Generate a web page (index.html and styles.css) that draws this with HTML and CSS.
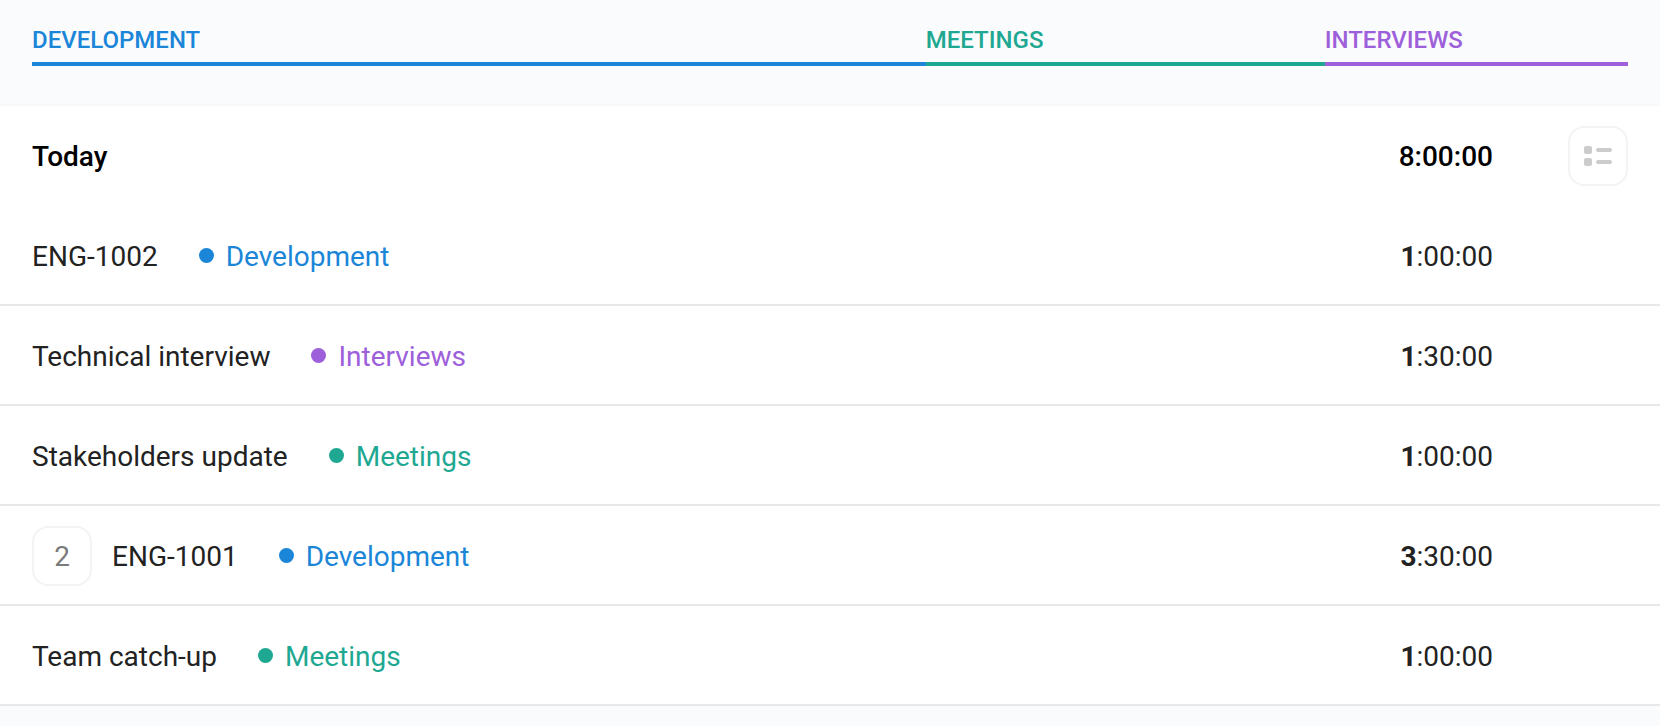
FILE: index.html
```
<!DOCTYPE html>
<html lang="en">
<head>
<meta charset="utf-8">
<meta name="viewport" content="width=device-width, initial-scale=1">
<title>Time entries</title>
<link rel="stylesheet" href="styles.css">
</head>
<body>
<header class="summary">
  <div class="segment development" style="width: 56%">Development</div>
  <div class="segment meetings" style="width: 25%">Meetings</div>
  <div class="segment interviews" style="width: 19%">Interviews</div>
</header>
<main class="day">
  <div class="row day-header">
    <h1 class="day-title">Today</h1>
    <span class="time">8:00:00</span>
    <div class="actions">
      <button class="box-button" type="button" aria-label="Group entries">
        <svg class="list-icon" width="28" height="20" viewBox="0 0 28 20" aria-hidden="true">
          <rect x="0" y="0" width="8" height="8" rx="2"/>
          <rect x="12" y="2" width="16" height="4" rx="2"/>
          <rect x="0" y="12" width="8" height="8" rx="2"/>
          <rect x="12" y="14" width="16" height="4" rx="2"/>
        </svg>
      </button>
    </div>
  </div>
  <ul class="entries">
    <li class="row entry">
      <span class="name">ENG-1002</span>
      <span class="project development">Development</span>
      <span class="time"><b>1</b>:00:00</span>
      <div class="actions"></div>
    </li>
    <li class="row entry">
      <span class="name">Technical interview</span>
      <span class="project interviews">Interviews</span>
      <span class="time"><b>1</b>:30:00</span>
      <div class="actions"></div>
    </li>
    <li class="row entry">
      <span class="name">Stakeholders update</span>
      <span class="project meetings">Meetings</span>
      <span class="time"><b>1</b>:00:00</span>
      <div class="actions"></div>
    </li>
    <li class="row entry">
      <button class="box-button count" type="button">2</button>
      <span class="name">ENG-1001</span>
      <span class="project development">Development</span>
      <span class="time"><b>3</b>:30:00</span>
      <div class="actions"></div>
    </li>
    <li class="row entry">
      <span class="name">Team catch-up</span>
      <span class="project meetings">Meetings</span>
      <span class="time"><b>1</b>:00:00</span>
      <div class="actions"></div>
    </li>
  </ul>
</main>
</body>
</html>
```

FILE: styles.css
```
* {
  box-sizing: border-box;
}

body {
  margin: 0;
  background: #fafbfd;
  color: #222;
  font-family: Roboto, sans-serif;
  font-size: 28px;
  line-height: 33px;
}

.development { color: #1b86d8; }
.meetings { color: #1ea892; }
.interviews { color: #9d60da; }

.summary {
  display: flex;
  padding: 24px 32px 40px;
}

.segment {
  padding-bottom: 6px;
  border-bottom: 4px solid currentColor;
  font-size: 24px;
  font-weight: 500;
  line-height: 32px;
  text-transform: uppercase;
}

.day {
  background: #fff;
  box-shadow: 0 2px 6px rgba(0, 0, 0, 0.07);
}

.row {
  display: flex;
  align-items: center;
  min-height: 100px;
  padding: 0 32px;
}

.day-header {
  color: #000;
  font-weight: 500;
}

.day-title {
  margin: 0;
  font-size: 28px;
  font-weight: 500;
}

.entries {
  margin: 0;
  padding: 0;
  list-style: none;
}

.entry {
  padding-top: 2px;
  border-bottom: 2px solid #e8e8e8;
}

.project {
  display: flex;
  align-items: center;
  gap: 12px;
  margin-left: 41px;
}

.project::before {
  content: "";
  width: 15px;
  height: 15px;
  margin-bottom: 1px;
  border-radius: 50%;
  background: currentColor;
}

.time {
  margin-left: auto;
}

.time b {
  font-weight: 700;
}

.actions {
  display: flex;
  justify-content: flex-end;
  width: 135px;
}

.box-button {
  display: flex;
  align-items: center;
  justify-content: center;
  width: 60px;
  height: 60px;
  padding: 0;
  border: 2px solid #f3f3f3;
  border-radius: 16px;
  background: #fff;
  color: #7a7a7a;
  font: inherit;
  cursor: pointer;
}

.count {
  margin-right: 20px;
}

.list-icon {
  fill: #ccc;
}
```
